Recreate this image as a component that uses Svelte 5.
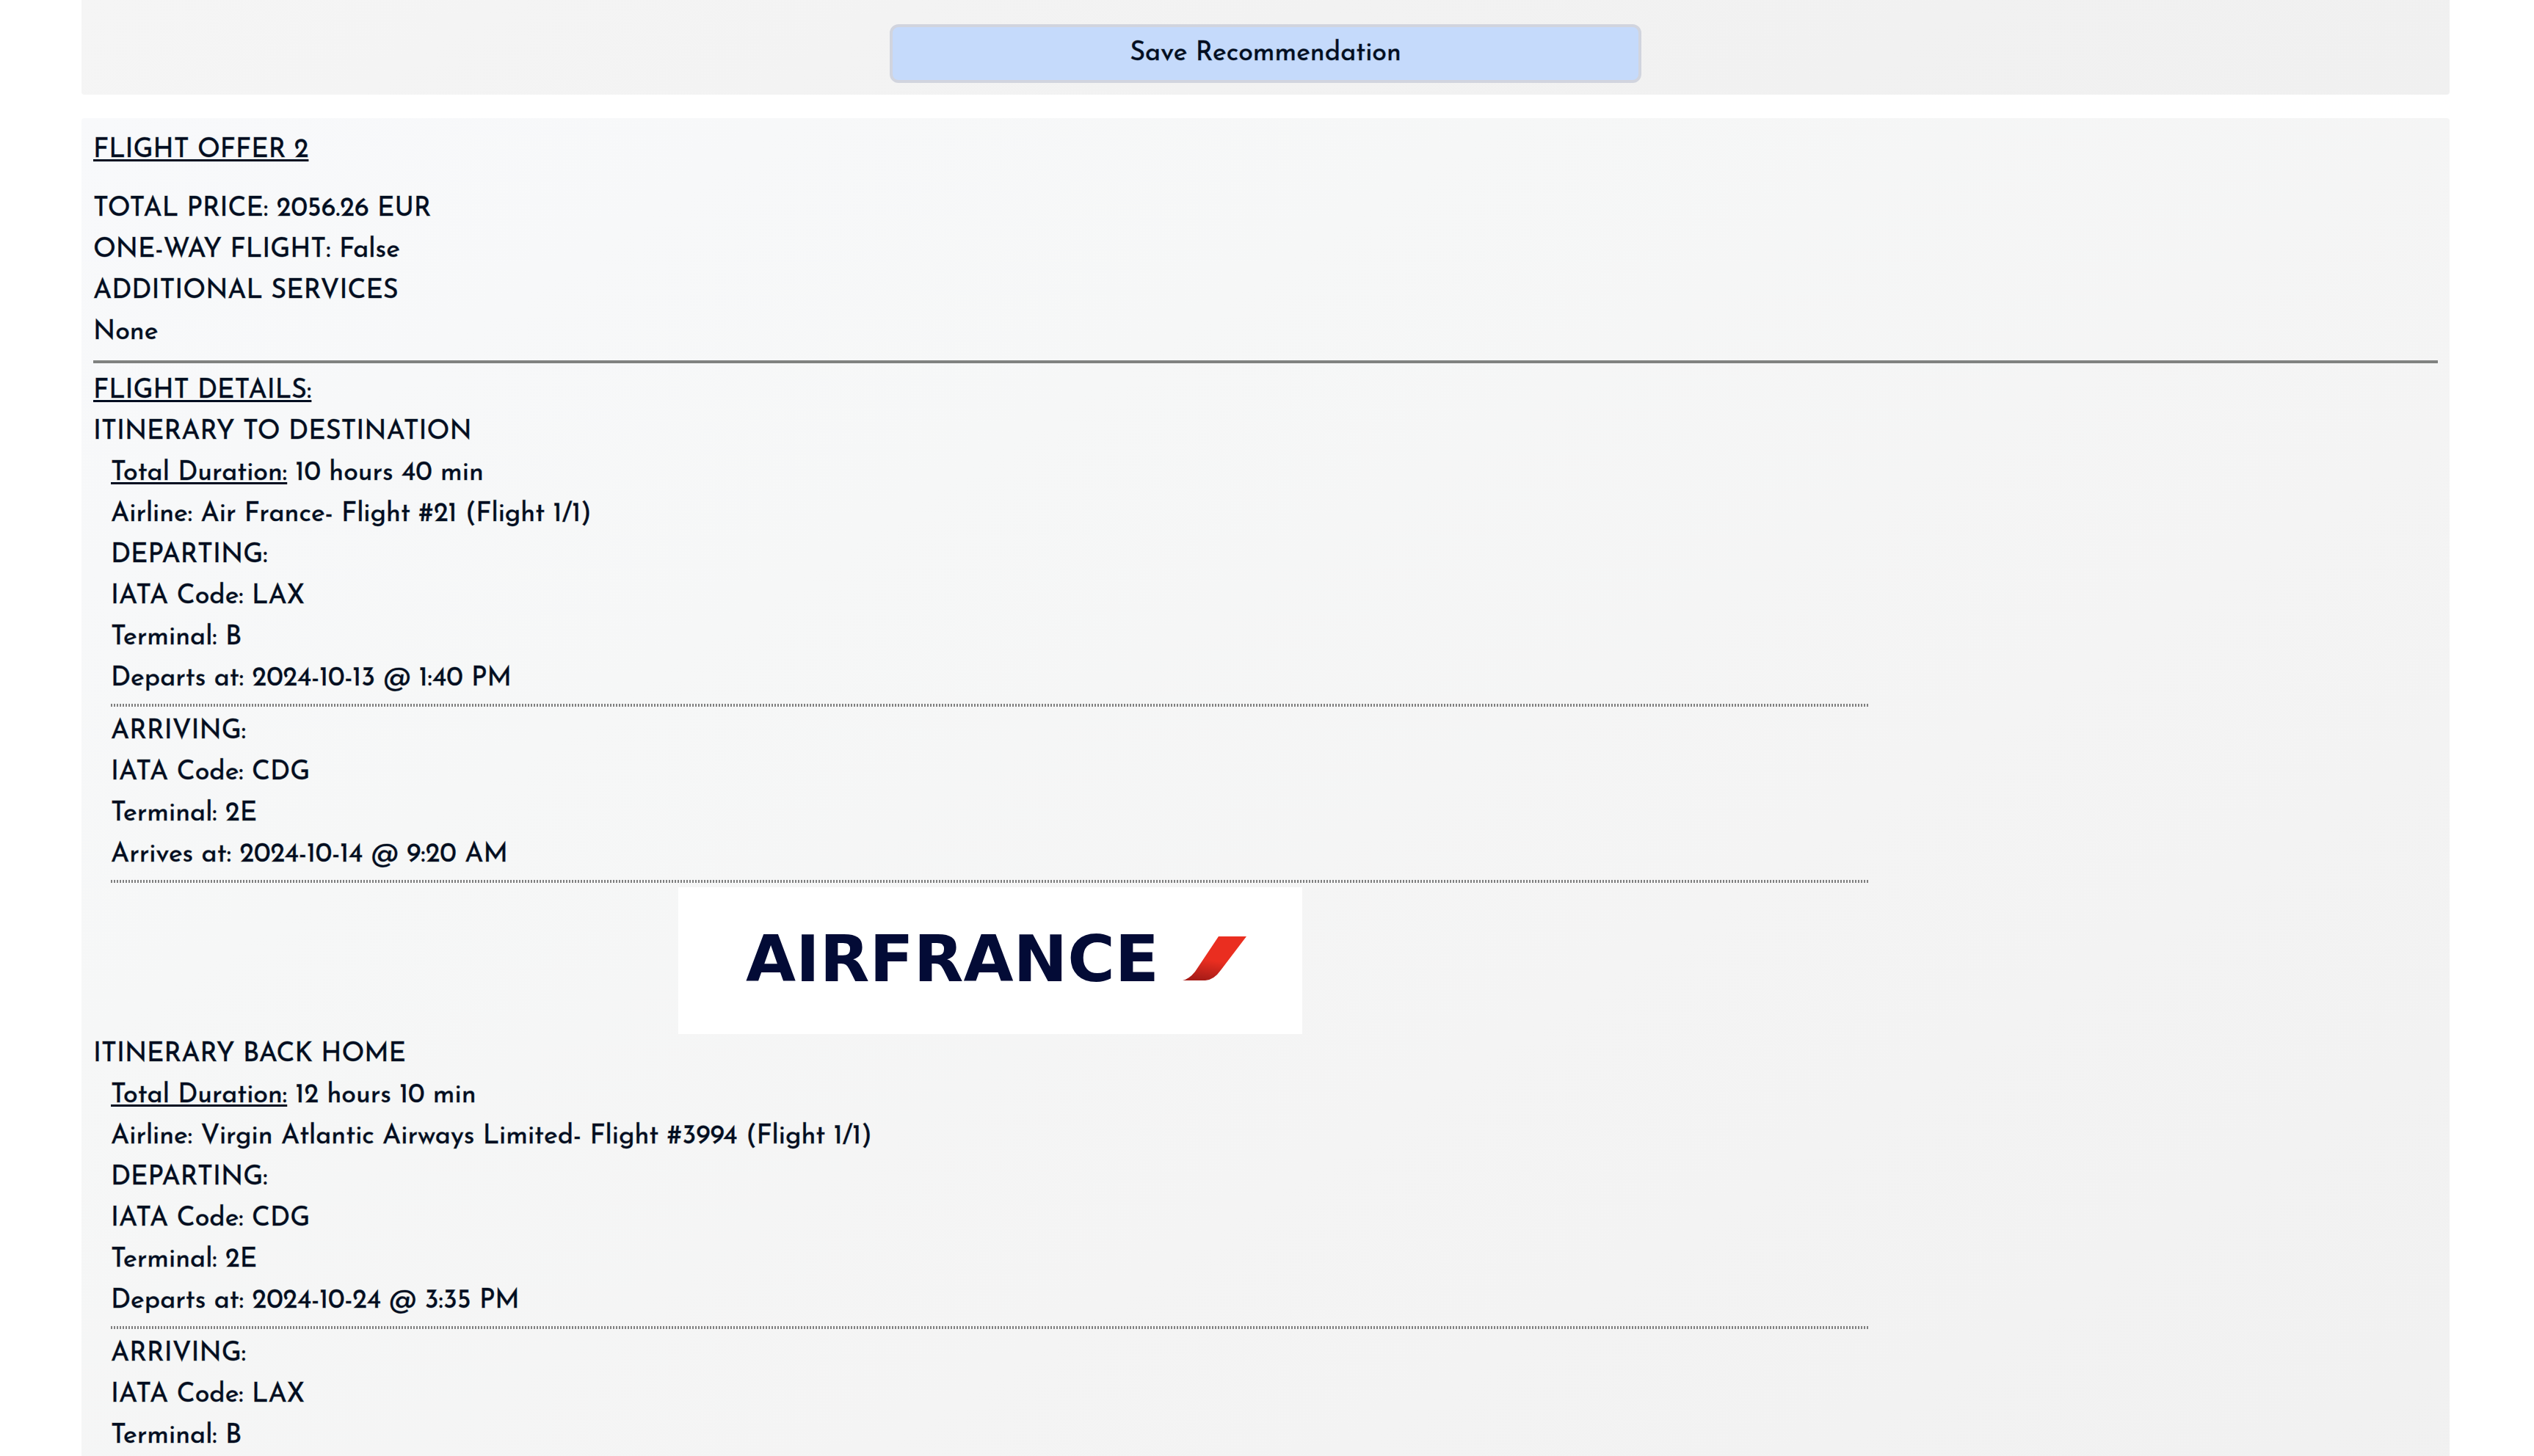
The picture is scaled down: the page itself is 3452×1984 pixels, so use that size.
<script>
  const summary = ['TOTAL PRICE: 2056.26 EUR', 'ONE-WAY FLIGHT: False', 'ADDITIONAL SERVICES', 'None'];

  const outbound = {
    title: 'ITINERARY TO DESTINATION',
    duration: '10 hours 40 min',
    airline: 'Air France- Flight #21 (Flight 1/1)',
    departing: ['IATA Code: LAX', 'Terminal: B', 'Departs at: 2024-10-13 @ 1:40 PM'],
    arriving: ['IATA Code: CDG', 'Terminal: 2E', 'Arrives at: 2024-10-14 @ 9:20 AM'],
    logo: true
  };

  const inbound = {
    title: 'ITINERARY BACK HOME',
    duration: '12 hours 10 min',
    airline: 'Virgin Atlantic Airways Limited- Flight #3994 (Flight 1/1)',
    departing: ['IATA Code: CDG', 'Terminal: 2E', 'Departs at: 2024-10-24 @ 3:35 PM'],
    arriving: ['IATA Code: LAX', 'Terminal: B'],
    logo: false
  };
</script>

<main class="page">
  <section class="card previous">
    <button type="button" class="save">Save Recommendation</button>
  </section>

  <section class="card offer">
    <h2 class="offer-title">FLIGHT OFFER 2</h2>
    {#each summary as line}
      <p>{line}</p>
    {/each}
    <hr class="rule" />
    <h3 class="underlined">FLIGHT DETAILS:</h3>

    {#each [outbound, inbound] as trip}
      <h4>{trip.title}</h4>
      <div class="segment">
        <p><span class="underlined">Total Duration:</span> {trip.duration}</p>
        <p>Airline: {trip.airline}</p>
        <p>DEPARTING:</p>
        {#each trip.departing as line}
          <p>{line}</p>
        {/each}
        <hr class="dots" />
        <p>ARRIVING:</p>
        {#each trip.arriving as line}
          <p>{line}</p>
        {/each}
        {#if trip.logo}
          <hr class="dots" />
          <svg class="logo" viewBox="0 0 850 200" role="img" aria-label="Air France">
            <defs>
              <linearGradient id="swoosh" x1="0.6" y1="0" x2="0.4" y2="1">
                <stop offset="0.55" stop-color="#ea2e20" />
                <stop offset="1" stop-color="#a81c18" />
              </linearGradient>
            </defs>
            <rect width="850" height="200" fill="#fff" />
            <text class="wordmark" x="92" y="128">AIRFRANCE</text>
            <path d="M736 67H774L739 113Q730 126 718 127H687Q696 125 704 115Z" fill="url(#swoosh)" />
          </svg>
        {/if}
      </div>
    {/each}
  </section>
</main>

<style>
  :global(body) {
    background: #fff;
  }

  .page {
    box-sizing: border-box;
    display: flex;
    flex-direction: column;
    gap: 32px;
    height: 100vh;
    overflow: hidden;
    padding: 0 115px 0 111px;
    color: #000d20;
    font: 400 36px/56px "Josefin Sans", Lato, sans-serif;
    -webkit-text-stroke: 1px rgb(0 13 32 / 40%);
  }

  .card {
    padding: 16px;
  }

  .previous {
    display: flex;
    justify-content: center;
    padding-top: 33px;
    border-radius: 0 0 4px 4px;
    background: linear-gradient(147deg, #f5f5f5, #f2f2f2 50%, #f0f0f0);
  }

  .offer {
    flex: 1 0 auto;
    border-radius: 4px 4px 0 0;
    background: linear-gradient(to bottom right, #f8f9fb, #f6f7f7 30%, #f4f4f4 60%, #f0f0f0) 0 0 / 100% 2100px;
  }

  .save {
    box-sizing: border-box;
    width: 1024px;
    max-width: 100%;
    height: 80px;
    padding: 0 24px;
    border: 4px solid #d1d4de;
    border-radius: 12px;
    background: #c5dafb;
    color: inherit;
    font: inherit;
    cursor: pointer;
  }

  h2,
  h3,
  h4,
  p {
    margin: 0;
    font: inherit;
  }

  .offer-title {
    margin-bottom: 24px;
  }

  .offer-title,
  .underlined {
    text-decoration: underline #000d20;
    text-decoration-thickness: 3px;
    text-underline-offset: 3px;
    text-decoration-skip-ink: none;
  }

  .rule {
    margin: 10px 0;
    border: 0;
    border-top: 4px solid #808280;
  }

  .segment {
    width: 75%;
    margin-left: 24px;
  }

  .dots {
    height: 4px;
    margin: 6px 0;
    border: 0;
    background: repeating-linear-gradient(90deg, #808080 0 2px, transparent 2px 4px);
  }

  .logo {
    display: block;
    width: 850px;
    max-width: 100%;
    margin: 0 auto;
  }

  .wordmark {
    fill: #030b36;
    font: 700 88px "DejaVu Sans", sans-serif;
    -webkit-text-stroke: 0;
  }
</style>
